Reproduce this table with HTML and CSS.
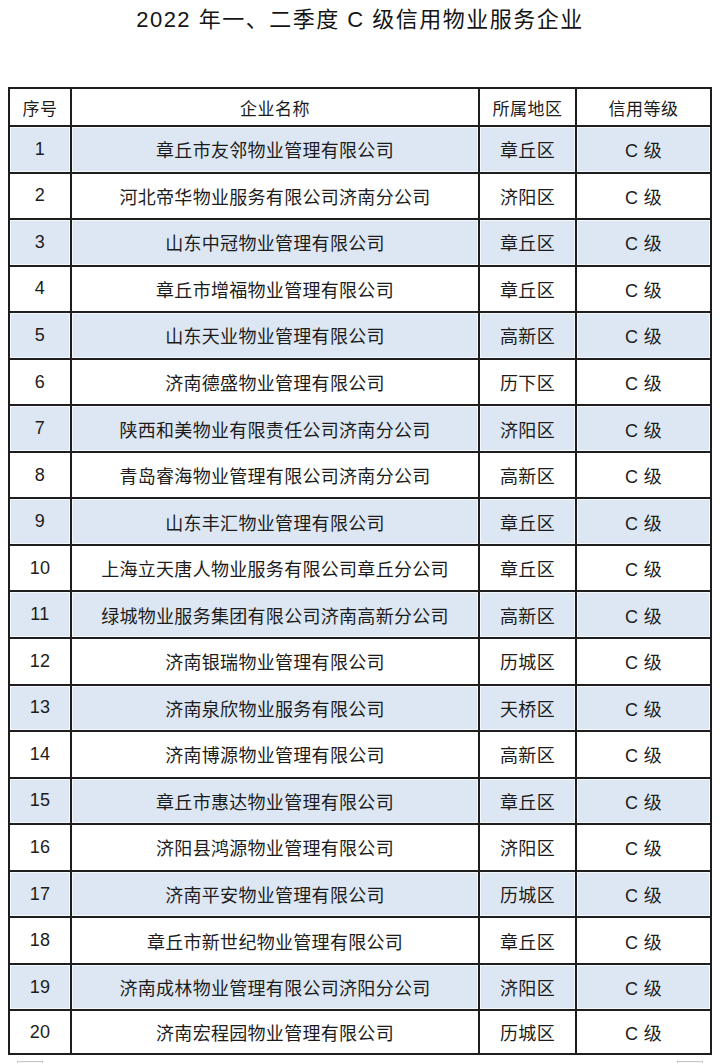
FILE: index.html
```html
<!DOCTYPE html>
<html lang="zh-CN">
<head>
<meta charset="utf-8">
<title>2022 年一、二季度 C 级信用物业服务企业</title>
<link rel="stylesheet" href="styles.css">
</head>
<body>
<h1 class="title">2022 年一、二季度 C 级信用物业服务企业</h1>
<div class="sheet" role="table">
  <div class="row head" role="row"><div class="cell">序号</div><div class="cell">企业名称</div><div class="cell">所属地区</div><div class="cell">信用等级</div></div>
  <div class="row odd" role="row"><div class="cell">1</div><div class="cell">章丘市友邻物业管理有限公司</div><div class="cell">章丘区</div><div class="cell">C 级</div></div>
  <div class="row" role="row"><div class="cell">2</div><div class="cell">河北帝华物业服务有限公司济南分公司</div><div class="cell">济阳区</div><div class="cell">C 级</div></div>
  <div class="row odd" role="row"><div class="cell">3</div><div class="cell">山东中冠物业管理有限公司</div><div class="cell">章丘区</div><div class="cell">C 级</div></div>
  <div class="row" role="row"><div class="cell">4</div><div class="cell">章丘市增福物业管理有限公司</div><div class="cell">章丘区</div><div class="cell">C 级</div></div>
  <div class="row odd" role="row"><div class="cell">5</div><div class="cell">山东天业物业管理有限公司</div><div class="cell">高新区</div><div class="cell">C 级</div></div>
  <div class="row" role="row"><div class="cell">6</div><div class="cell">济南德盛物业管理有限公司</div><div class="cell">历下区</div><div class="cell">C 级</div></div>
  <div class="row odd" role="row"><div class="cell">7</div><div class="cell">陕西和美物业有限责任公司济南分公司</div><div class="cell">济阳区</div><div class="cell">C 级</div></div>
  <div class="row" role="row"><div class="cell">8</div><div class="cell">青岛睿海物业管理有限公司济南分公司</div><div class="cell">高新区</div><div class="cell">C 级</div></div>
  <div class="row odd" role="row"><div class="cell">9</div><div class="cell">山东丰汇物业管理有限公司</div><div class="cell">章丘区</div><div class="cell">C 级</div></div>
  <div class="row" role="row"><div class="cell">10</div><div class="cell">上海立天唐人物业服务有限公司章丘分公司</div><div class="cell">章丘区</div><div class="cell">C 级</div></div>
  <div class="row odd" role="row"><div class="cell">11</div><div class="cell">绿城物业服务集团有限公司济南高新分公司</div><div class="cell">高新区</div><div class="cell">C 级</div></div>
  <div class="row" role="row"><div class="cell">12</div><div class="cell">济南银瑞物业管理有限公司</div><div class="cell">历城区</div><div class="cell">C 级</div></div>
  <div class="row odd" role="row"><div class="cell">13</div><div class="cell">济南泉欣物业服务有限公司</div><div class="cell">天桥区</div><div class="cell">C 级</div></div>
  <div class="row" role="row"><div class="cell">14</div><div class="cell">济南博源物业管理有限公司</div><div class="cell">高新区</div><div class="cell">C 级</div></div>
  <div class="row odd" role="row"><div class="cell">15</div><div class="cell">章丘市惠达物业管理有限公司</div><div class="cell">章丘区</div><div class="cell">C 级</div></div>
  <div class="row" role="row"><div class="cell">16</div><div class="cell">济阳县鸿源物业管理有限公司</div><div class="cell">济阳区</div><div class="cell">C 级</div></div>
  <div class="row odd" role="row"><div class="cell">17</div><div class="cell">济南平安物业管理有限公司</div><div class="cell">历城区</div><div class="cell">C 级</div></div>
  <div class="row" role="row"><div class="cell">18</div><div class="cell">章丘市新世纪物业管理有限公司</div><div class="cell">章丘区</div><div class="cell">C 级</div></div>
  <div class="row odd" role="row"><div class="cell">19</div><div class="cell">济南成林物业管理有限公司济阳分公司</div><div class="cell">济阳区</div><div class="cell">C 级</div></div>
  <div class="row" role="row"><div class="cell">20</div><div class="cell">济南宏程园物业管理有限公司</div><div class="cell">历城区</div><div class="cell">C 级</div></div>
</div>
<div class="pager">
  <span class="pbox"></span>
  <span class="pbox"></span>
</div>
</body>
</html>
```

FILE: styles.css
```css
html, body {
  margin: 0;
  padding: 0;
  background: #ffffff;
}

body {
  font-family: "Liberation Sans", "Noto Sans CJK SC", sans-serif;
  color: #1c1c1c;
}

.title {
  margin: 0;
  padding-top: 5px;
  font-size: 22px;
  line-height: 29px;
  font-weight: normal;
  letter-spacing: 1.5px;
  text-align: center;
  color: #141414;
}

.sheet {
  margin: 53px 8px 0 8px;
  width: 704px;
  box-sizing: border-box;
  padding: 2px;
  background: #1e1e1e;
  display: grid;
  grid-template-columns: 60px 406px 95px 133px;
  grid-template-rows: 36px repeat(19, 44.55px) 42px;
  gap: 2px;
}

.row {
  display: contents;
}

.cell {
  background: #ffffff;
  display: flex;
  align-items: center;
  justify-content: center;
  font-size: 18px;
  letter-spacing: 0.3px;
  color: #1c1c1c;
  white-space: nowrap;
}

.head .cell {
  font-size: 17px;
  letter-spacing: 0.5px;
}

.odd .cell {
  background: #dde7f3;
  box-shadow: inset 0 0 0 1px #f4f8fc;
}

.pager {
  display: flex;
  justify-content: space-between;
  padding: 0 17px;
  margin-top: 6px;
}

.pbox {
  width: 26px;
  height: 20px;
  box-sizing: border-box;
  border: 1px solid #c8c8c8;
  background: #f7f7f7;
}
```
